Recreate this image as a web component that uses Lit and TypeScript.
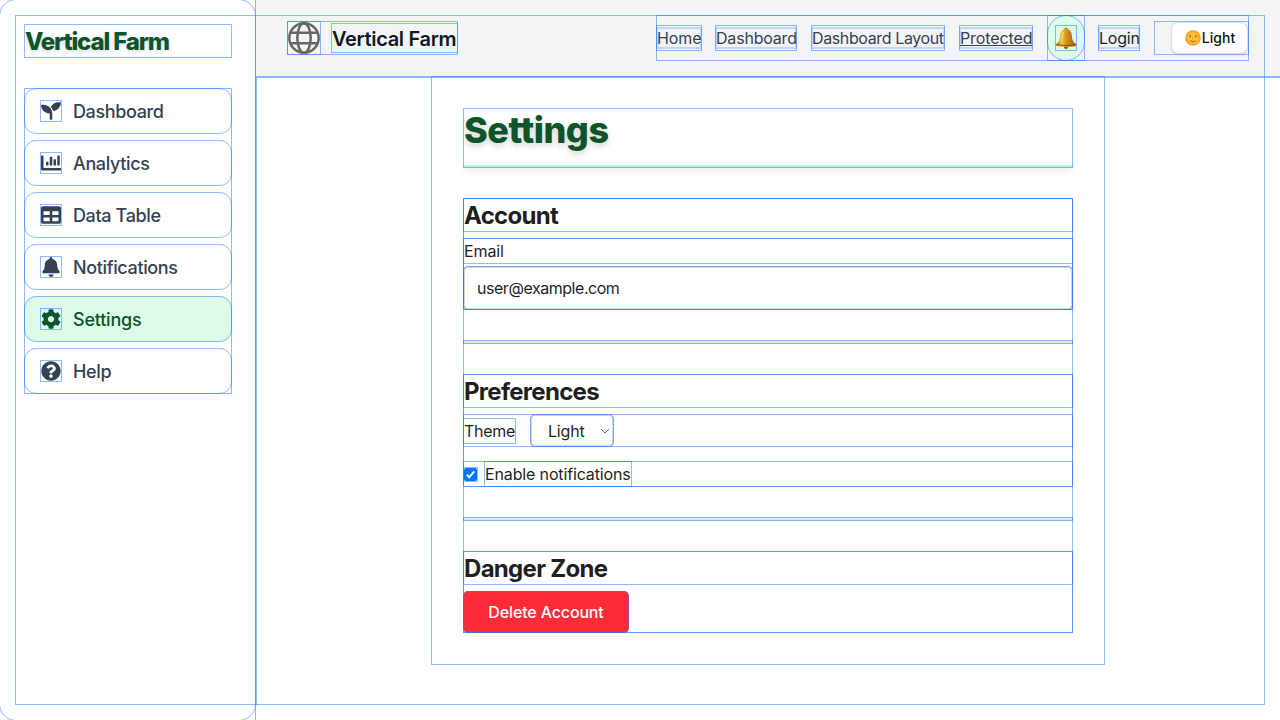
import { LitElement, html, css, svg } from "lit";
import { customElement } from "lit/decorators.js";

const nav = [
  { label: "Dashboard", vb: "0 0 512 512", d: "M64 96H0c0 123.700 100.300 224 224 224v144c0 8.800 7.200 16 16 16h32c8.800 0 16-7.200 16-16V320C288 196.300 187.700 96 64 96zm384-64c-84.200 0-157.400 46.500-195.700 115.200 27.700 30.200 48.200 66.900 59 107.600C424 243.100 512 147.900 512 32h-64z" },
  { label: "Analytics", vb: "0 0 512 512", d: "M332.800 320h38.400c6.400 0 12.800-6.400 12.800-12.800V172.800c0-6.400-6.400-12.800-12.800-12.800h-38.400c-6.400 0-12.800 6.400-12.800 12.800v134.400c0 6.400 6.400 12.800 12.800 12.800zm96 0h38.400c6.400 0 12.800-6.400 12.800-12.800V76.800c0-6.400-6.400-12.800-12.800-12.800h-38.400c-6.400 0-12.800 6.400-12.800 12.800v230.400c0 6.400 6.400 12.800 12.800 12.800zm-288 0h38.400c6.400 0 12.800-6.400 12.800-12.800v-70.400c0-6.400-6.400-12.800-12.800-12.800h-38.400c-6.400 0-12.800 6.400-12.800 12.800v70.400c0 6.400 6.400 12.800 12.800 12.800zm96 0h38.400c6.400 0 12.800-6.400 12.800-12.800V108.800c0-6.400-6.400-12.800-12.800-12.800h-38.400c-6.400 0-12.800 6.400-12.800 12.800v198.400c0 6.400 6.400 12.800 12.800 12.800zM496 384H64V80c0-8.840-7.160-16-16-16H16C7.160 64 0 71.160 0 80v336c0 17.670 14.330 32 32 32h464c8.840 0 16-7.160 16-16v-32c0-8.840-7.160-16-16-16z" },
  { label: "Data Table", vb: "0 0 512 512", d: "M464 32H48C21.490 32 0 53.490 0 80v352c0 26.510 21.490 48 48 48h416c26.510 0 48-21.490 48-48V80c0-26.510-21.490-48-48-48zM224 416H64v-96h160v96zm0-160H64v-96h160v96zm224 160H288v-96h160v96zm0-160H288v-96h160v96z" },
  { label: "Notifications", vb: "0 0 448 512", d: "M224 512c35.320 0 63.970-28.650 63.970-64H160.030c0 35.350 28.650 64 63.970 64zm215.390-149.710c-19.320-20.760-55.470-51.990-55.470-154.290 0-77.700-54.480-139.900-127.940-155.160V32c0-17.670-14.320-32-31.980-32s-31.980 14.330-31.980 32v20.840C118.560 68.100 64.080 130.300 64.080 208c0 102.300-36.150 133.530-55.470 154.290-6 6.450-8.660 14.160-8.610 21.710.11 16.400 12.980 32 32.100 32h383.800c19.120 0 32-15.600 32.100-32 .05-7.550-2.610-15.270-8.610-21.710z" },
  { label: "Settings", active: true, vb: "0 0 512 512", d: "M487.400 315.700l-42.600-24.600c4.300-23.200 4.300-47 0-70.200l42.600-24.600c4.900-2.800 7.100-8.600 5.500-14-11.100-35.600-30-67.800-54.700-94.600-3.800-4.100-10-5.100-14.800-2.300L380.800 110c-17.900-15.400-38.500-27.300-60.800-35.100V25.800c0-5.600-3.900-10.500-9.400-11.700-36.700-8.200-74.300-7.800-109.200 0-5.500 1.200-9.400 6.100-9.400 11.700V75c-22.200 7.900-42.800 19.800-60.800 35.100L88.700 85.500c-4.900-2.800-11-1.900-14.800 2.300-24.700 26.700-43.600 58.900-54.700 94.600-1.700 5.400.6 11.200 5.500 14L67.300 221c-4.300 23.200-4.300 47 0 70.200l-42.600 24.600c-4.900 2.800-7.100 8.600-5.500 14 11.100 35.600 30 67.800 54.700 94.600 3.800 4.100 10 5.100 14.800 2.300l42.600-24.600c17.900 15.400 38.500 27.300 60.800 35.100v49.200c0 5.600 3.900 10.500 9.400 11.700 36.700 8.200 74.300 7.800 109.200 0 5.500-1.200 9.400-6.100 9.400-11.700v-49.200c22.200-7.900 42.800-19.800 60.800-35.100l42.600 24.600c4.900 2.800 11 1.900 14.800-2.300 24.700-26.700 43.600-58.900 54.700-94.600 1.500-5.500-.7-11.300-5.600-14.100zM256 336c-44.100 0-80-35.900-80-80s35.900-80 80-80 80 35.900 80 80-35.900 80-80 80z" },
  { label: "Help", vb: "0 0 512 512", d: "M504 256c0 136.997-111.043 248-248 248S8 392.997 8 256C8 119.083 119.043 8 256 8s248 111.083 248 248zM262.655 90c-54.497 0-89.255 22.957-116.549 63.758-3.536 5.286-2.353 12.415 2.715 16.258l34.699 26.310c5.205 3.947 12.621 3.008 16.665-2.122 17.864-22.658 30.113-35.797 57.303-35.797 20.429 0 45.698 13.148 45.698 32.958 0 14.976-12.363 22.667-32.534 33.976C247.128 238.528 216 254.941 216 296v4c0 6.627 5.373 12 12 12h56c6.627 0 12-5.373 12-12v-1.333c0-28.462 83.186-29.647 83.186-106.667 0-58.002-60.165-102-116.531-102zM256 338c-25.365 0-46 20.635-46 46 0 25.364 20.635 46 46 46s46-20.636 46-46c0-25.365-20.635-46-46-46z" },
];

const bell = svg`
  <defs>
    <linearGradient id="gold" x1="0" x2="1"><stop offset="0" stop-color="#b87a12"/><stop offset=".3" stop-color="#f3c53c"/><stop offset=".5" stop-color="#d9971c"/><stop offset="1" stop-color="#94580a"/></linearGradient>
  </defs>
  <circle cx="11" cy="20" r="2" fill="#8a5207"/>
  <circle cx="11" cy="2" r="1.600" fill="#b9790f"/>
  <path d="M11 2c3.700 0 5.500 2.500 5.800 6.500.3 4 1 6.300 4.200 8.500 1.200 1-.5 2.300-3 2.500-4 .5-10 .5-14 0-2.500-.2-4.200-1.500-3-2.500 3.200-2.200 3.900-4.500 4.200-8.500C5.500 4.500 7.300 2 11 2z" fill="url(#gold)"/>
  <path d="M1.500 17.300c5 1.600 14 1.600 19 0" fill="none" stroke="#8a5409" stroke-width="1"/>
  <path d="M8.500 5c-1.200 2-.8 6-2.500 9.500" fill="none" stroke="#ffe68a" stroke-width="1"/>`;

const face = svg`
  <defs><radialGradient id="sun"><stop offset="0" stop-color="#ffd34d"/><stop offset=".7" stop-color="#fdb62f"/><stop offset="1" stop-color="#f09a1c"/></radialGradient></defs>
  <circle cx="8" cy="8" r="7.800" fill="url(#sun)"/>
  <ellipse cx="5.300" cy="6.300" rx=".8" ry="1.100" fill="#8a5a1c"/><ellipse cx="10.700" cy="6.300" rx=".8" ry="1.100" fill="#8a5a1c"/>
  <path d="M8 6.500v2.600" stroke="#e08a1c" stroke-width=".8"/>
  <path d="M5.200 10.700q2.800 2 5.600 0" fill="none" stroke="#a8601a" stroke-width=".9"/>`;

@customElement("app-root")
export class AppRoot extends LitElement {
  static styles = css`
    :host { display: block; position: relative; width: 1280px; height: 720px; overflow: hidden; background: #fff; color: #1f1f1f; font: 16px/26px Inter, sans-serif; }
    *, *::before, *::after { box-sizing: border-box; }
    h1, h2, p { margin: 0; }
    .o { outline: 1px solid rgba(36, 120, 255, 0.5); outline-offset: -1px; }
    .out { outline-offset: 0; }
    .frame { position: absolute; inset: 15px; pointer-events: none; }
    .app { display: flex; height: 100%; }
    .side { width: 255px; margin-right: 1px; padding: 24px 23px 24px 24px; border-radius: 16px; flex: none; }
    .logo { height: 34px; margin-bottom: 30px; font-size: 24px; font-weight: 800; line-height: 35px; letter-spacing: -1.15px; color: #0d542b; text-shadow: 0 2px 4px rgba(0,0,0,.15); box-shadow: 0 8px 12px -4px rgba(0,0,0,.02); padding-left: 1px; }
    .menu { display: flex; flex-direction: column; gap: 6px; }
    .item { height: 46px; border-radius: 12px; padding: 0 16px; display: flex; align-items: center; gap: 11px; font-size: 18px; font-weight: 480; letter-spacing: -0.37px; color: #364153; }
    .item span { padding-top: 2px; }
    .item.active { background: #dcfce7; color: #0d542b; letter-spacing: -0.22px; }
    .ico { width: 22px; height: 22px; padding: 1px; flex: none; fill: currentColor; }
    .right { flex: 1; display: flex; flex-direction: column; min-width: 0; }
    .head { height: 77px; padding: 15px 31px 16px; background: #f3f4f6; display: flex; justify-content: space-between; align-items: center; border-bottom: 1px solid rgba(36, 120, 255, 0.5); }
    .brand { display: flex; align-items: center; gap: 10px; width: 171px; height: 34px; }
    .globe { width: 34px; height: 34px; padding: 1px; flex: none; }
    .name { height: 30px; width: 127px; line-height: 32px; font-size: 20px; font-weight: 600; letter-spacing: -0.33px; padding-left: 1px; color: #101828; white-space: nowrap; }
    .links { display: flex; align-items: center; gap: 14px; height: 46px; width: 593px; }
    .link { height: 26px; padding: 2px 0; white-space: nowrap; color: #364153; letter-spacing: -0.2px; }
    .link > span { display: block; height: 22px; line-height: 22px; padding-left: 1px; outline: 2px solid rgba(36, 120, 255, 0.23); outline-offset: -2px; }
    .w1 { width: 46px; margin-right: -1px; letter-spacing: -0.1px; } .w2 { width: 82px; } .w3 { width: 134px; letter-spacing: -0.38px; } .w4 { width: 74px; text-decoration: underline; letter-spacing: -0.1px; } .w5 { width: 42px; margin-left: -1px; color: #1f1f1f; }
    .alert { width: 38px; height: 46px; border-radius: 23px; background: #dcfce7; display: flex; align-items: center; justify-content: center; }
    .alertbox { width: 38px; height: 46px; }
    .bell { width: 22px; height: 26px; padding: 1px 0; }
    .mode { width: 95px; height: 34px; padding: 1px 1px 1px 17px; }
    .toggle { width: 77px; height: 32px; border-radius: 8px; border: 1px solid #dcdee2; background: #fff; display: flex; align-items: center; justify-content: center; font-size: 14px; font-weight: 500; box-shadow: 0 1px 2px rgba(0,0,0,.12); color: #111; gap: 1px; padding-left: 1px; }
    .face { width: 16px; height: 16px; }
    .main { height: 628px; border: solid rgba(36, 120, 255, 0.5); border-width: 1px 0 0 1px; }
    .page { width: 674px; height: 589px; margin: -2px 0 0 174px; padding: 32px; }
    .title { height: 60px; padding-left: 1px; border-bottom: 3px solid #b9f8cf; font-size: 36px; line-height: 45px; font-weight: 800; color: #0d542b; text-shadow: 0 3px 6px rgba(0,0,0,.18); box-shadow: 0 6px 8px -2px rgba(0,0,0,.07); letter-spacing: -0.45px; }
    .body { margin-top: 30px; }
    .sec1 { height: 112px; } .sec2 { height: 113px; margin-top: 30px; } .sec3 { height: 82px; margin-top: 30px; }
    .h { height: 34px; font-size: 24px; line-height: 35px; font-weight: 650; letter-spacing: -0.7px; padding-left: 1px; margin-bottom: 6px; }
    .field { height: 72px; }
    .lab { height: 26px; padding-left: 1px; line-height: 27px; letter-spacing: -0.1px; }
    .input { height: 44px; margin-top: 2px; border: 2px solid #d1d5dc; border-radius: 5px; line-height: 41px; padding-left: 12px; letter-spacing: -0.46px; }
    .hr { height: 4px; margin-top: 30px; background: #e5e7eb; }
    .row { height: 33px; display: flex; align-items: center; gap: 14px; }
    .theme { width: 53px; height: 26px; line-height: 26px; padding-left: 1px; letter-spacing: -0.3px; }
    .select { width: 84px; height: 33px; border: 2px solid #cfd6e2; border-radius: 5px; display: flex; align-items: center; justify-content: space-between; padding: 0 2px 0 16px; line-height: 30px; letter-spacing: -0.2px; }
    .chev { width: 10px; height: 8px; }
    .check { margin-top: 14px; height: 26px; display: flex; align-items: center; gap: 6px; }
    .box { width: 15px; height: 15px; padding: 1px; }
    .checktext { width: 148px; height: 26px; padding-left: 1px; line-height: 27px; white-space: nowrap; letter-spacing: -0.14px; }
    .del { width: 166px; height: 42px; border-radius: 5px; background: #fb2c36; color: #fff; font-weight: 500; line-height: 43px; text-align: center; letter-spacing: -0.15px; }
  `;

  render() {
    return html`
      <div class="app">
        <aside class="side o out">
          <h1 class="logo o">Vertical Farm</h1>
          <nav class="menu o">
            ${nav.map((n) => html`<div class="item o ${n.active ? "active" : ""}"><svg class="ico o" viewBox=${n.vb}><path d=${n.d} /></svg><span>${n.label}</span></div>`)}
          </nav>
        </aside>
        <div class="right o out">
          <header class="head">
            <div class="brand o">
              <svg class="globe o" viewBox="0 0 32 32" fill="none" stroke="#666" stroke-width="2.500"><circle cx="16" cy="16" r="14.700"/><ellipse cx="16" cy="16" rx="6.700" ry="14.700"/><path d="M2.500 10.700h27M2.500 21.300h27"/></svg>
              <span class="name o">Vertical Farm</span>
            </div>
            <nav class="links o">
              <div class="link w1 o"><span>Home</span></div>
              <div class="link w2 o"><span>Dashboard</span></div>
              <div class="link w3 o"><span>Dashboard Layout</span></div>
              <div class="link w4 o"><span>Protected</span></div>
              <div class="alertbox o"><div class="alert o"><svg class="bell o" viewBox="0 0 22 22">${bell}</svg></div></div>
              <div class="link w5 o"><span>Login</span></div>
              <div class="mode o"><div class="toggle"><svg class="face" viewBox="0 0 16 16">${face}</svg>Light</div></div>
            </nav>
          </header>
          <main class="main">
            <div class="page o">
              <h1 class="title o">Settings</h1>
              <div class="body o">
                <section class="sec1 o">
                  <h2 class="h o">Account</h2>
                  <div class="field o"><div class="lab o">Email</div><div class="input o">user@example.com</div></div>
                </section>
                <div class="hr o"></div>
                <section class="sec2 o">
                  <h2 class="h o">Preferences</h2>
                  <div class="row o"><span class="theme o">Theme</span><div class="select o">Light<svg class="chev" viewBox="0 0 10 8" fill="none" stroke="#666"><path d="M1 2l4 4 4-4"/></svg></div></div>
                  <div class="check o"><svg class="box o" viewBox="0 0 13 13"><rect width="13" height="13" rx="2" fill="#0075ff"/><path d="M2.800 6.800l2.400 2.500 5-6" fill="none" stroke="#fff" stroke-width="2"/></svg><span class="checktext o">Enable notifications</span></div>
                </section>
                <div class="hr o"></div>
                <section class="sec3 o">
                  <h2 class="h o">Danger Zone</h2>
                  <div class="del o">Delete Account</div>
                </section>
              </div>
            </div>
          </main>
        </div>
      </div>
      <div class="frame o"></div>
    `;
  }
}
